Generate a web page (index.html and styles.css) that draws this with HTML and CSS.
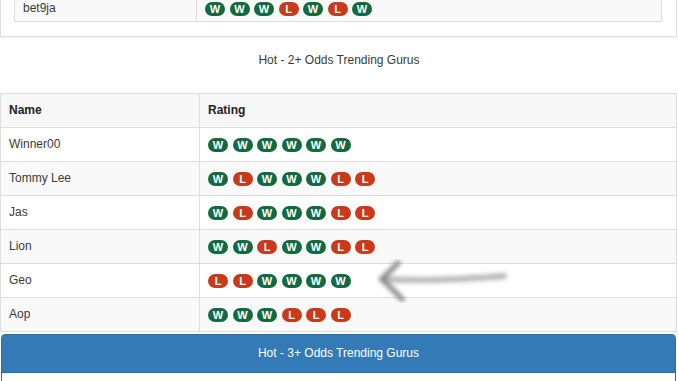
FILE: index.html
```html
<!DOCTYPE html>
<html>
<head>
<meta charset="utf-8">
<link rel="stylesheet" href="styles.css">
</head>
<body>
<div class="panel-top">
  <table class="grid top-grid">
    <tr>
      <td class="name-col">bet9ja</td>
      <td><span class="badges"><span class="b w">W</span><span class="b w">W</span><span class="b w">W</span><span class="b l">L</span><span class="b w">W</span><span class="b l">L</span><span class="b w">W</span></span></td>
    </tr>
  </table>
</div>

<div class="caption">Hot - 2+ Odds Trending Gurus</div>

<div class="wrap">
  <table class="grid main-grid">
    <tr class="head"><td class="name-col2">Name</td><td>Rating</td></tr>
    <tr><td>Winner00</td><td><span class="badges"><span class="b w">W</span><span class="b w">W</span><span class="b w">W</span><span class="b w">W</span><span class="b w">W</span><span class="b w">W</span></span></td></tr>
    <tr class="odd"><td>Tommy Lee</td><td><span class="badges"><span class="b w">W</span><span class="b l">L</span><span class="b w">W</span><span class="b w">W</span><span class="b w">W</span><span class="b l">L</span><span class="b l">L</span></span></td></tr>
    <tr><td>Jas</td><td><span class="badges"><span class="b w">W</span><span class="b l">L</span><span class="b w">W</span><span class="b w">W</span><span class="b w">W</span><span class="b l">L</span><span class="b l">L</span></span></td></tr>
    <tr class="odd"><td>Lion</td><td><span class="badges"><span class="b w">W</span><span class="b w">W</span><span class="b l">L</span><span class="b w">W</span><span class="b w">W</span><span class="b l">L</span><span class="b l">L</span></span></td></tr>
    <tr><td>Geo</td><td><span class="badges"><span class="b l">L</span><span class="b l">L</span><span class="b w">W</span><span class="b w">W</span><span class="b w">W</span><span class="b w">W</span></span></td></tr>
    <tr class="odd"><td>Aop</td><td><span class="badges"><span class="b w">W</span><span class="b w">W</span><span class="b w">W</span><span class="b l">L</span><span class="b l">L</span><span class="b l">L</span></span></td></tr>
  </table>
  <svg class="arrow" width="140" height="44" viewBox="0 0 140 44">
    <defs>
      <filter id="blur" x="-20%" y="-50%" width="140%" height="200%">
        <feGaussianBlur stdDeviation="2.2"/>
      </filter>
    </defs>
    <g filter="url(#blur)" fill="none" stroke-linecap="round">
      <path d="M8 20 C40 22 70 21 100 19 C115 18 125 18 130 17" stroke="#a5a5a5" stroke-width="6" opacity="0.8"/>
      <path d="M24 4 C18 10 12 16 8 20 C14 26 20 32 28 40" stroke="#808080" stroke-width="5.5" opacity="0.85"/>
    </g>
  </svg>
</div>

<div class="panel-blue">
  <div class="panel-heading">Hot - 3+ Odds Trending Gurus</div>
  <div class="panel-body"></div>
</div>
</body>
</html>
```
FILE: styles.css
```css
html, body {
  margin: 0;
  padding: 0;
  background: #ffffff;
}
body {
  font-family: "Liberation Sans", Arial, sans-serif;
  font-size: 12px;
  color: #3a3a3a;
  overflow: hidden;
}
.panel-top {
  margin-top: -12px;
  border: 1px solid #dddddd;
  border-top: none;
  padding: 0 14px 14px 13px;
  box-shadow: 0 1px 2px rgba(0,0,0,0.06);
  width: calc(100% - 1px);
  box-sizing: border-box;
}
.grid {
  border-collapse: collapse;
  width: 100%;
  border: 1px solid #dddddd;
}
.grid td {
  border: 1px solid #dddddd;
  padding: 8px 8px;
  line-height: 17px;
  vertical-align: middle;
}
.top-grid td {
  background: #f9f9f9;
  padding: 11px 8px 4px 8px;
  line-height: 17px;
}
.top-grid .name-col {
  width: 165px;
}
.caption {
  text-align: center;
  padding: 15px 0 24px 0;
  line-height: 17px;
}
.wrap {
  position: relative;
  width: calc(100% - 1px);
}
.main-grid .name-col2 {
  width: 182px;
}
.main-grid tr.head td {
  background: #f7f7f7;
  font-weight: bold;
  color: #222222;
}
.main-grid tr.odd td {
  background: #f9f9f9;
}
.badges {
  display: flex;
  gap: 4.5px;
  align-items: center;
  height: 17px;
}
.b {
  display: inline-flex;
  align-items: center;
  justify-content: center;
  width: 20px;
  height: 14px;
  border-radius: 7px;
  color: #ffffff;
  font-weight: bold;
  font-size: 11px;
  line-height: 14px;
}
.b.w {
  background: #136a41;
}
.b.l {
  background: #c93a1b;
}
.arrow {
  position: absolute;
  left: 374px;
  top: 166px;
}
.panel-blue {
  margin-top: 2px;
  margin-left: 1px;
  width: calc(100% - 3px);
  border: 1px solid #2e6da4;
  border-radius: 4px 4px 0 0;
  box-sizing: border-box;
}
.panel-heading {
  background: #337ab7;
  color: #ffffff;
  text-align: center;
  padding: 10px 15px;
  line-height: 17px;
  border-bottom: 1px solid #2e6da4;
}
.panel-body {
  height: 40px;
  background: #ffffff;
}
```
